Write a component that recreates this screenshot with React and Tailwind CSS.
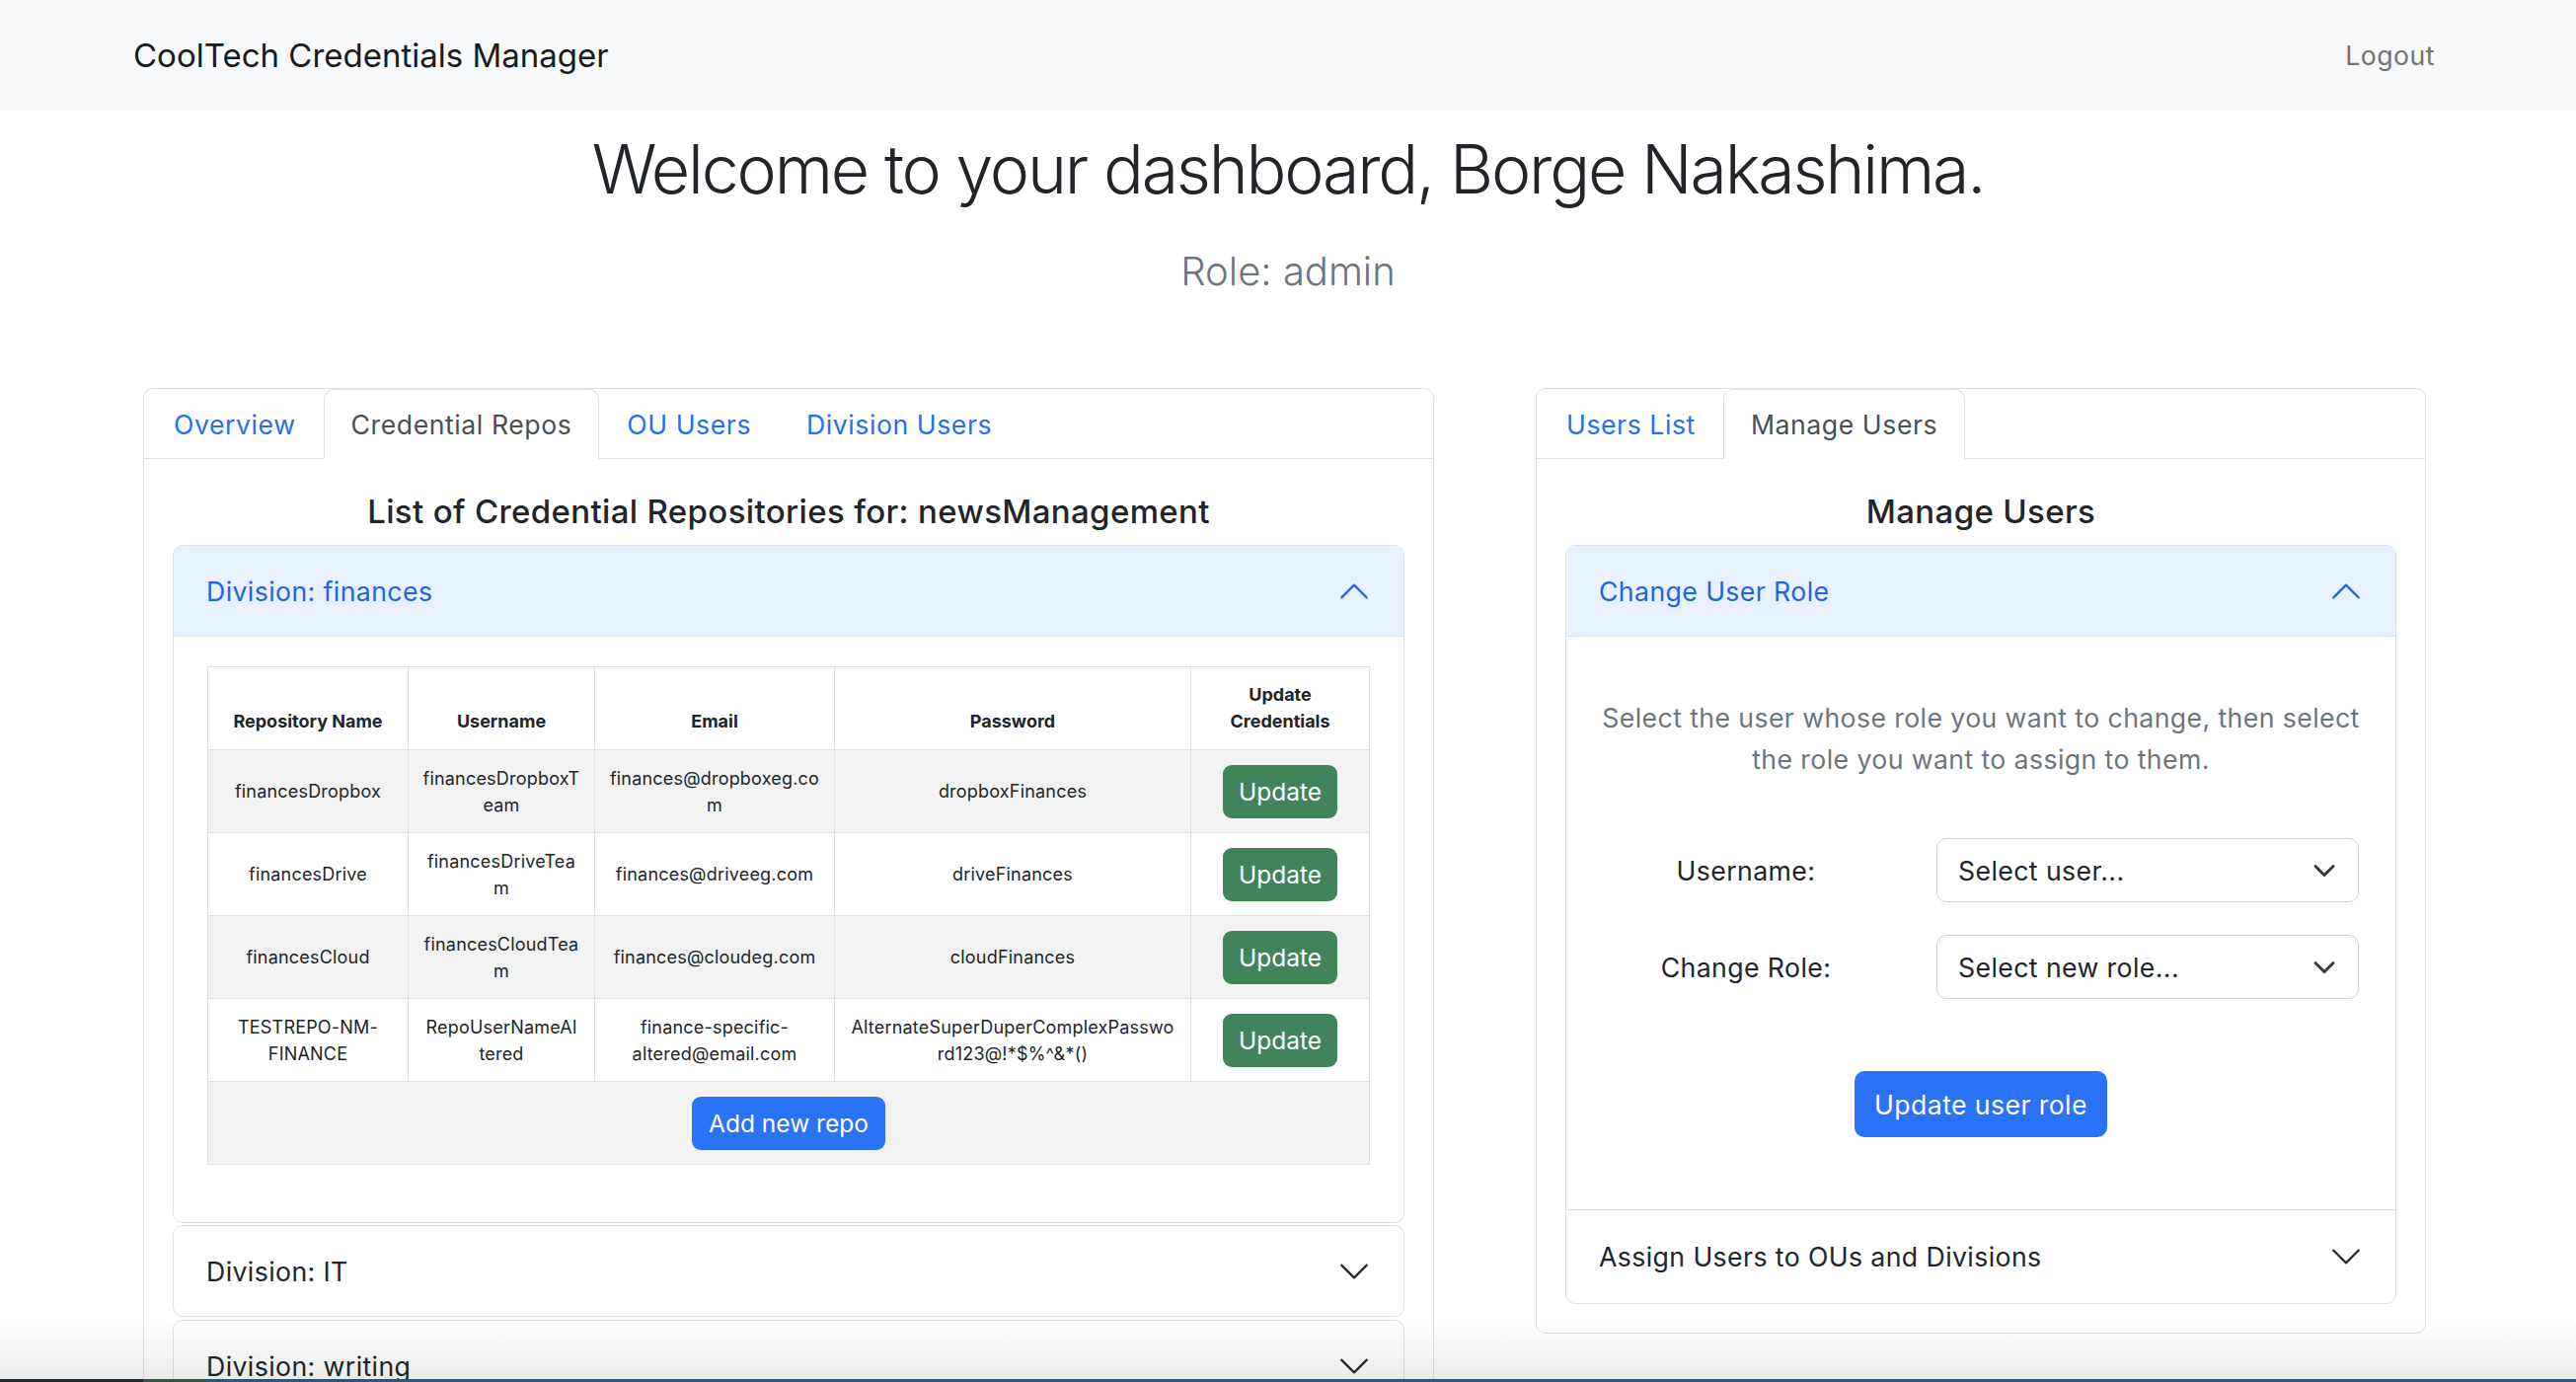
import React from "react";

function Chevron({ up, className }) {
  return (
    <svg viewBox="0 0 16 16" fill="currentColor" className={className}>
      <path
        fillRule="evenodd"
        transform={up ? "rotate(180 8 8)" : undefined}
        d="M1.646 4.646a.5.5 0 0 1 .708 0L8 10.293l5.646-5.647a.5.5 0 0 1 .708.708l-6 6a.5.5 0 0 1-.708 0l-6-6a.5.5 0 0 1 0-.708z"
      />
    </svg>
  );
}

function Tabs({ items, active }) {
  return (
    <div className="flex border-b border-[#dee2e6] pl-[2px]">
      {items.map((t) =>
        t === active ? (
          <div
            key={t}
            className="-mb-px flex h-[71px] items-center rounded-t-[10px] border border-[#dee2e6] border-b-white bg-white px-[27px] text-[26.67px] tracking-[0.55px] text-[#495057]"
          >
            {t}
          </div>
        ) : (
          <div
            key={t}
            className="-mb-px flex h-[71px] items-center rounded-t-[10px] border border-transparent px-[27px] text-[26.67px] tracking-[0.55px] text-[#2470f5]"
          >
            {t}
          </div>
        )
      )}
    </div>
  );
}

function OpenHeader({ title }) {
  return (
    <div className="flex h-[92px] items-center justify-between rounded-t-[9px] border-b border-[#dee2e6] bg-[#e7f1ff] px-[33px] text-[26.67px] tracking-[0.4px] text-[#2064e6]">
      <span>{title}</span>
      <Chevron up className="h-[34px] w-[34px]" />
    </div>
  );
}

function ClosedHeader({ title }) {
  return (
    <div className="flex h-[91px] items-center justify-between px-[33px] text-[26.67px] tracking-[0.4px] text-[#212529]">
      <span>{title}</span>
      <Chevron className="h-[34px] w-[34px]" />
    </div>
  );
}

const rows = [
  ["financesDropbox", "financesDropboxT\neam", "finances@dropboxeg.co\nm", "dropboxFinances"],
  ["financesDrive", "financesDriveTea\nm", "finances@driveeg.com", "driveFinances"],
  ["financesCloud", "financesCloudTea\nm", "finances@cloudeg.com", "cloudFinances"],
  [
    "TESTREPO-NM-\nFINANCE",
    "RepoUserNameAl\ntered",
    "finance-specific-\naltered@email.com",
    "AlternateSuperDuperComplexPasswo\nrd123@!*$%^&*()",
  ],
];

function RepoTable() {
  return (
    <table className="w-full table-fixed border-collapse border border-[#dee2e6] text-center text-[18px] leading-[27px] text-[#212529]">
      <colgroup>
        <col className="w-[203px]" />
        <col className="w-[189px]" />
        <col className="w-[243px]" />
        <col className="w-[361px]" />
        <col />
      </colgroup>
      <thead>
        <tr className="h-[84px]">
          {["Repository Name", "Username", "Email", "Password", "Update Credentials"].map((h) => (
            <th
              key={h}
              className="border border-[#dee2e6] px-[13px] pb-[15px] align-bottom font-bold"
            >
              {h}
            </th>
          ))}
        </tr>
      </thead>
      <tbody>
        {rows.map((r, i) => (
          <tr key={i} className={i % 2 === 0 ? "h-[84px] bg-[#f2f2f2]" : "h-[84px] bg-white"}>
            {r.map((c, j) => (
              <td
                key={j}
                className="whitespace-pre-line border border-[#dee2e6] px-[10px] align-middle tracking-[0.2px]"
              >
                {c}
              </td>
            ))}
            <td className="border border-[#dee2e6] px-[13px] align-middle">
              <button className="h-[54px] rounded-[9px] bg-[#42845a] px-[16px] text-[24.5px] leading-[54px] text-white">
                Update
              </button>
            </td>
          </tr>
        ))}
        <tr className="h-[84px] bg-[#f2f2f2]">
          <td colSpan={5} className="border border-[#dee2e6] align-middle">
            <button className="h-[54px] rounded-[9px] bg-[#2a72f6] px-[17px] text-[24.5px] leading-[54px] text-white">
              Add new repo
            </button>
          </td>
        </tr>
      </tbody>
    </table>
  );
}

function LeftCard() {
  return (
    <div className="w-[1308px] shrink-0 rounded-[10px] border border-[#dee2e6] bg-white">
      <Tabs items={["Overview", "Credential Repos", "OU Users", "Division Users"]} active="Credential Repos" />
      <div className="px-[29px] pt-[33px] pb-[40px]">
        <h5 className="mb-[14px] text-center text-[33px] font-medium leading-[40px] tracking-[0.35px]">
          List of Credential Repositories for: newsManagement
        </h5>
        <div className="rounded-[10px] border border-[#dee2e6]">
          <OpenHeader title="Division: finances" />
          <div className="px-[34px] pt-[30px] pb-[58px]">
            <RepoTable />
          </div>
        </div>
        <div className="mt-[2px] rounded-[10px] border border-[#dee2e6]">
          <ClosedHeader title="Division: IT" />
        </div>
        <div className="mt-[3px] rounded-[10px] border border-[#dee2e6]">
          <ClosedHeader title="Division: writing" />
        </div>
      </div>
    </div>
  );
}

function SelectBox({ label }) {
  return (
    <div className="flex h-[65px] items-center justify-between rounded-[10px] border border-[#ced4da] bg-white pl-[21px] pr-[22px] text-[26.67px] tracking-[0.4px] text-[#212529]">
      <span>{label}</span>
      <svg viewBox="0 0 16 16" className="h-[24px] w-[24px]" fill="none" stroke="#343a40" strokeWidth="2" strokeLinecap="round" strokeLinejoin="round">
        <path d="m2 5 6 6 6-6" />
      </svg>
    </div>
  );
}

function RightCard() {
  return (
    <div className="w-[902px] shrink-0 rounded-[10px] border border-[#dee2e6] bg-white">
      <Tabs items={["Users List", "Manage Users"]} active="Manage Users" />
      <div className="px-[29px] pt-[33px] pb-[29px]">
        <h5 className="mb-[14px] text-center text-[33px] font-medium leading-[40px] tracking-[0.35px]">Manage Users</h5>
        <div className="rounded-[10px] border border-[#dee2e6]">
          <OpenHeader title="Change User Role" />
          <div className="px-[33px] pt-[61px] pb-[73px]">
            <p className="-mx-[8px] text-center text-[26.67px] leading-[42px] tracking-[0.4px] text-[#6c757d]">
              Select the user whose role you want to change, then select the role you want to assign to them.
            </p>
            <div className="mt-[59px] grid grid-cols-[298px_428px] items-center gap-x-[44px] gap-y-[33px] text-[26.67px] tracking-[0.4px]">
              <span className="text-center">Username:</span>
              <SelectBox label="Select user..." />
              <span className="text-center">Change Role:</span>
              <SelectBox label="Select new role..." />
            </div>
            <div className="mt-[73px] flex justify-center">
              <button className="h-[67px] rounded-[10px] bg-[#2a72f6] px-[20px] text-[26.67px] tracking-[0.4px] text-white">
                Update user role
              </button>
            </div>
          </div>
          <div className="flex h-[95px] items-center justify-between border-t border-[#dee2e6] px-[33px] text-[26.67px] tracking-[0.4px] text-[#212529]">
            <span>Assign Users to OUs and Divisions</span>
            <Chevron className="h-[34px] w-[34px]" />
          </div>
        </div>
      </div>
    </div>
  );
}

export default function App() {
  return (
    <div className="relative h-[1400px] overflow-hidden bg-white text-[#212529] [font-family:Inter,sans-serif]">
      <nav className="flex h-[112px] items-center justify-between bg-[#f8f9fa] pl-[135px] pr-[143px]">
        <span className="text-[33px] leading-[40px] text-[#1a1a1a]">CoolTech Credentials Manager</span>
        <span className="text-[26.67px] leading-[40px] tracking-[0.5px] text-[#737373]">Logout</span>
      </nav>
      <h1 className="mt-[16px] text-center text-[68px] font-light leading-[86px] tracking-[-2.2px]">
        Welcome to your dashboard, Borge Nakashima.
      </h1>
      <p className="mt-[37px] text-center text-[40px] font-light leading-[48px] text-[#6c757d]">Role: admin</p>
      <div className="mt-[94px] flex items-start gap-[103px] pl-[145px]">
        <LeftCard />
        <RightCard />
      </div>
      <div className="pointer-events-none absolute inset-x-0 bottom-0">
        <div className="h-[60px] bg-linear-to-b from-black/0 to-black/[0.08]" />
        <div className="flex h-[3px]">
          <div className="w-[145px] bg-[#1d2733]" />
          <div className="w-[62px] bg-[#2d5b40]" />
          <div className="flex-1 bg-[#245889]" />
        </div>
      </div>
    </div>
  );
}
